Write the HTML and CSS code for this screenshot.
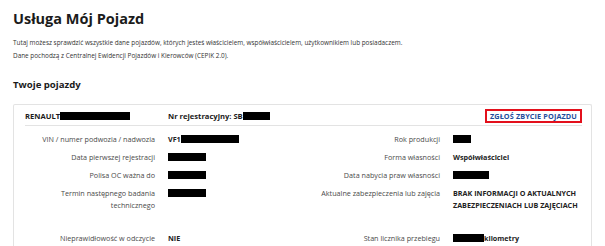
FILE: index.html
```html
<!DOCTYPE html>
<html lang="pl">
<head>
<meta charset="utf-8">
<link rel="stylesheet" href="styles.css">
</head>
<body>
<main class="page">
  <h1 class="title">Usługa Mój Pojazd</h1>
  <p class="intro">Tutaj możesz sprawdzić wszystkie dane pojazdów, których jesteś właścicielem, współwłaścicielem, użytkownikiem lub posiadaczem.<br>Dane pochodzą z Centralnej Ewidencji Pojazdów i Kierowców (CEPIK 2.0).</p>
  <h2 class="subtitle">Twoje pojazdy</h2>
  <section class="card">
    <div class="card-head">
      <div class="make">RENAULT<span class="redact" style="width:70px"></span></div>
      <div class="plate">Nr rejestracyjny: SB<span class="redact" style="width:27px"></span></div>
      <div class="action"><a class="btn" href="#">ZGŁOŚ ZBYCIE POJAZDU</a></div>
    </div>
    <div class="grid">
      <div class="label">VIN / numer podwozia / nadwozia</div>
      <div class="value">VF1<span class="redact" style="width:58px"></span></div>
      <div class="label">Rok produkcji</div>
      <div class="value"><span class="redact" style="width:18px"></span></div>

      <div class="label">Data pierwszej rejestracji</div>
      <div class="value"><span class="redact" style="width:38px"></span></div>
      <div class="label">Forma własności</div>
      <div class="value">Współwłaściciel</div>

      <div class="label">Polisa OC ważna do</div>
      <div class="value"><span class="redact" style="width:38px"></span></div>
      <div class="label">Data nabycia praw własności</div>
      <div class="value"><span class="redact" style="width:36px"></span></div>

      <div class="label">Termin następnego badania technicznego</div>
      <div class="value"><span class="redact" style="width:38px"></span></div>
      <div class="label">Aktualne zabezpieczenia lub zajęcia</div>
      <div class="value">BRAK INFORMACJI O AKTUALNYCH ZABEZPIECZENIACH LUB ZAJĘCIACH</div>

      <div class="label spaced">Nieprawidłowość w odczycie</div>
      <div class="value spaced">NIE</div>
      <div class="label spaced">Stan licznika przebiegu</div>
      <div class="value spaced"><span class="redact" style="width:31px"></span>kilometry</div>
    </div>
  </section>
</main>
</body>
</html>
```

FILE: styles.css
```css
* { box-sizing: border-box; }
html, body { margin: 0; padding: 0; background: #fff; }
body {
  font-family: "Open Sans", "Noto Sans", "DejaVu Sans", sans-serif;
  color: #1b1b1b;
}
.page {
  padding: 8px 13px 0 13px;
}
.title {
  margin: 0;
  font-size: 14.5px;
  line-height: 22px;
  font-weight: 700;
  color: #1b1b1b;
}
.intro {
  margin: 6px 0 0 0;
  font-size: 6.4px;
  line-height: 13px;
  color: #333;
}
.subtitle {
  margin: 16px 0 0 0;
  font-size: 9.6px;
  line-height: 14px;
  font-weight: 700;
}
.card {
  margin-top: 12px;
  border: 1px solid #e3e3e3;
  border-bottom: none;
  border-radius: 2px;
  padding: 3px 9px 0 11px;
  height: 200px;
}
.card-head,
.grid {
  display: grid;
  grid-template-columns: 130px 1fr 130px 1fr;
  column-gap: 13px;
}
.card-head {
  align-items: center;
  border-bottom: 1px solid #e3e3e3;
  padding-bottom: 2px;
  font-weight: 700;
  font-size: 7.6px;
}
.make, .plate {
  display: flex;
  align-items: center;
  height: 15px;
}
.plate { grid-column: 2 / 4; }
.action {
  display: flex;
  justify-content: flex-end;
}
.btn {
  display: inline-block;
  border: 2px solid #e3101c;
  padding: 0 3px;
  line-height: 10px;
  color: #1f4e9c;
  font-size: 7.3px;
  font-weight: 700;
  text-decoration: none;
  letter-spacing: 0.1px;
}
.redact {
  display: inline-block;
  height: 8px;
  background: #000;
  vertical-align: middle;
}
.grid {
  padding-top: 7px;
  row-gap: 6px;
  font-size: 7.2px;
  line-height: 12px;
}
.label {
  text-align: right;
  color: #4a4a4a;
}
.value {
  font-weight: 700;
  color: #222;
  display: flex;
  align-items: flex-start;
}
.value .redact { margin-top: 2px; }
.spaced { margin-top: 15px; }
```
